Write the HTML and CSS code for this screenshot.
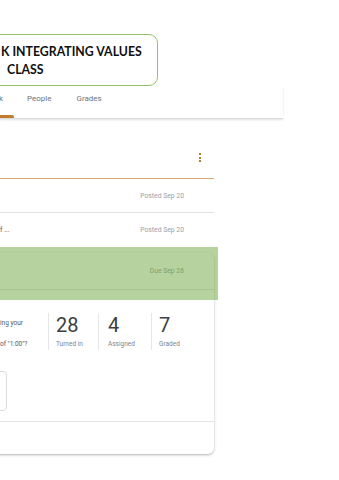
FILE: index.html
```html
<!DOCTYPE html>
<html>
<head>
<meta charset="utf-8">
<link rel="stylesheet" href="styles.css">
</head>
<body>
<div class="title">
  <div class="title-line">K INTEGRATING VALUES</div>
  <div class="title-line indent">CLASS</div>
</div>
<nav class="tabbar">
  <div class="tab active"><span class="tab-label">Classwork</span></div>
  <div class="tab"><span class="tab-label">People</span></div>
  <div class="tab"><span class="tab-label">Grades</span></div>
</nav>
<section class="stream">
  <header class="topic-head">
    <span class="kebab"><i></i><i></i><i></i></span>
  </header>
  <div class="row"><span class="row-title"></span><span class="meta">Posted Sep 20</span></div>
  <div class="row plain"><span class="row-title">f ...</span><span class="meta">Posted Sep 20</span></div>
  <article class="card">
    <div class="card-head"><span class="meta">Due Sep 26</span></div>
    <div class="card-body">
      <div class="summary">
        <div class="question">
          <p class="q1">ing your</p>
          <p class="q2">of "1:00"?</p>
        </div>
        <div class="stat s1"><div class="num">28</div><div class="lbl">Turned in</div></div>
        <div class="stat s2"><div class="num">4</div><div class="lbl">Assigned</div></div>
        <div class="stat s3"><div class="num">7</div><div class="lbl">Graded</div></div>
      </div>
      <div class="attach"></div>
    </div>
    <div class="card-foot"></div>
  </article>
</section>
<div class="highlight"></div>
</body>
</html>
```
FILE: styles.css
```css
html, body {
  margin: 0;
  padding: 0;
  background: #ffffff;
  overflow: hidden;
  width: 339px;
  height: 480px;
}
body {
  font-family: Roboto, "Liberation Sans", sans-serif;
  color: #3c4043;
  position: relative;
}
.title {
  margin-top: 34px;
  margin-left: -14px;
  width: 172px;
  height: 52px;
  border: 1px solid #94c26a;
  border-radius: 9px;
  box-sizing: border-box;
  padding: 8px 0 0 14px;
  font-family: Lato, "Open Sans", sans-serif;
  font-weight: 700;
  font-size: 12.3px;
  line-height: 18px;
  color: #111;
  white-space: nowrap;
}
.title-line.indent { padding-left: 6px; }
.tabbar {
  display: flex;
  width: 283px;
  height: 33px;
  box-sizing: border-box;
  border-bottom: 1px solid #dadce0;
  box-shadow: 0 1px 2px rgba(0,0,0,0.12);
}
.tab {
  display: flex;
  flex-direction: column;
  justify-content: space-between;
  height: 32px;
  font-size: 8px;
  color: #6f7378;
  margin-left: 25px;
}
.tab-label { line-height: 26px; white-space: nowrap; }
.tab.active {
  width: 14px;
  margin-left: 0;
  margin-right: -12px;
  align-items: flex-end;
}
.tab.active .tab-label { margin-right: 11px; }
.tab.active::after {
  content: "";
  display: block;
  width: 14px;
  height: 3px;
  background: #c27b2c;
  border-radius: 0 2px 0 0;
}
.stream {
  width: 214px;
  margin-top: 21px;
}
.topic-head {
  height: 39px;
  box-sizing: border-box;
  border-bottom: 1px solid #d9ab76;
  display: flex;
  justify-content: flex-end;
  align-items: flex-start;
  padding: 13px 13px 0 0;
}
.kebab {
  display: flex;
  flex-direction: column;
  gap: 1.5px;
}
.kebab i {
  display: block;
  width: 2px;
  height: 2px;
  background: #a9843b;
}
.row {
  height: 34px;
  box-sizing: border-box;
  border-bottom: 1px solid #e3e3e3;
  display: flex;
  align-items: center;
  justify-content: space-between;
  padding-right: 30px;
}
.row.plain { border-bottom: none; height: 33px; }
.row-title { font-size: 7px; color: #55595e; }
.meta { font-size: 6.8px; color: #9aa0a6; }
.card {
  margin-top: 7px;
  margin-left: -10px;
  width: 224px;
  border-radius: 0 6px 6px 0;
  box-shadow: 0 1px 3px rgba(60,64,67,0.3), 0 1px 1px rgba(60,64,67,0.1);
  background: #fff;
}
.card-head {
  height: 37px;
  box-sizing: border-box;
  border-bottom: 1px solid #e3e3e3;
  display: flex;
  align-items: center;
  justify-content: flex-end;
  padding-right: 30px;
}
.card-body {
  padding: 20px 0 10px 10px;
  border-bottom: 1px solid #e3e3e3;
}
.summary {
  display: flex;
  align-items: flex-start;
}
.question {
  width: 48px;
  padding-top: 8px;
  font-size: 6.5px;
  color: #55595e;
}
.question p { margin: 0; line-height: 10px; white-space: nowrap; }
.question .q2 { margin-top: 11px; }
.stat {
  margin-top: 3px;
  border-left: 1px solid #e6e6e6;
  height: 37px;
  box-sizing: border-box;
}
.s1 { width: 50px; padding-left: 7px; }
.s2 { width: 53px; padding-left: 9px; }
.s3 { width: 50px; padding-left: 7px; }
.num {
  font-size: 20px;
  line-height: 24px;
  color: #3c4043;
}
.lbl {
  font-size: 6.5px;
  line-height: 10px;
  margin-top: 2px;
  color: #80868b;
  white-space: nowrap;
}
.attach {
  margin-top: 21px;
  margin-left: -20px;
  width: 27px;
  height: 40px;
  box-sizing: border-box;
  border: 1px solid #dadce0;
  border-radius: 4px;
}
.card-foot { height: 32px; }
.highlight {
  position: absolute;
  left: 0;
  top: 247px;
  width: 218px;
  height: 53px;
  background: rgba(100,160,50,0.47);
}
```
